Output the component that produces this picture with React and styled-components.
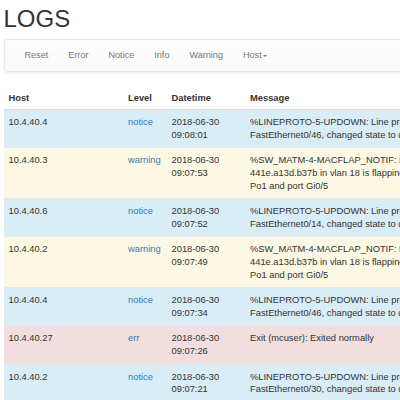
import React from "react";
import styled, { createGlobalStyle } from "styled-components";

const GlobalStyle = createGlobalStyle`
  html, body {
    margin: 0;
    padding: 0;
    background: #fff;
    overflow: hidden;
  }
  body {
    font-family: "Liberation Sans", Arial, Helvetica, sans-serif;
    font-size: 9.33px;
    line-height: 12.6px;
    color: #333;
  }
`;

const Page = styled.div`
  width: 620px;
  padding: 0 0 0 3.5px;
  box-sizing: border-box;
`;

const Title = styled.h1`
  margin: 5.5px 0 6.7px;
  font-size: 24px;
  line-height: 26.4px;
  font-weight: 500;
  color: #333;
`;

const Navbar = styled.nav`
  box-sizing: border-box;
  height: 33.5px;
  margin: 0 0 14px;
  display: flex;
  align-items: center;
  padding: 0 10px;
  border: 1px solid #e7e7e7;
  border-radius: 2.67px;
  background: linear-gradient(to bottom, #ffffff 0%, #f8f8f8 100%);
  box-shadow: inset 0 1px 0 rgba(255, 255, 255, 0.15), 0 1px 3px rgba(0, 0, 0, 0.075);
`;

const NavList = styled.ul`
  display: flex;
  margin: 0;
  padding: 0;
  list-style: none;
`;

const NavLink = styled.a`
  display: block;
  padding: 0 10px;
  color: #777;
  font-size: 9.1px;
  text-decoration: none;
  line-height: 12.6px;
  cursor: pointer;
`;

const Caret = styled.span`
  display: inline-block;
  width: 0;
  height: 0;
  margin-left: 1.33px;
  vertical-align: middle;
  border-top: 2.67px solid #777;
  border-right: 2.67px solid transparent;
  border-left: 2.67px solid transparent;
`;

const Table = styled.table`
  width: 480px;
  table-layout: fixed;
  border-collapse: collapse;
  border-spacing: 0;
`;

const HeadCell = styled.th`
  text-align: left;
  font-weight: bold;
  padding: 6px 5px 4.6px;
  line-height: 12.6px;
  border-bottom: 1px solid #dddddd;
  vertical-align: bottom;
  white-space: nowrap;
`;

const rowColors = {
  info: "#d9edf7",
  warning: "#fcf8e3",
  danger: "#f2dede",
};

const Row = styled.tr`
  background: ${(p) => rowColors[p.$variant] || "transparent"};
`;

const Cell = styled.td`
  padding: 6px 5px;
  line-height: 12.6px;
  vertical-align: top;
  border-top: 1px solid #e9e9e9;
  white-space: ${(p) => (p.$nowrap ? "nowrap" : "normal")};
`;

const LevelLink = styled.a`
  color: #337ab7;
  text-decoration: none;
`;

const LINE = (fa) =>
  `%LINEPROTO-5-UPDOWN: Line protocol on Interface FastEthernet0/${fa}, changed state to down`;
const FLAP =
  "%SW_MATM-4-MACFLAP_NOTIF: Host 441e.a13d.b37b in vlan 18 is flapping between port Po1 and port Gi0/5";

const logs = [
  { host: "10.4.40.4", level: "notice", time: "09:08:01", msg: LINE(46), v: "info" },
  { host: "10.4.40.3", level: "warning", time: "09:07:53", msg: FLAP, v: "warning" },
  { host: "10.4.40.6", level: "notice", time: "09:07:52", msg: LINE(14), v: "info" },
  { host: "10.4.40.2", level: "warning", time: "09:07:49", msg: FLAP, v: "warning" },
  { host: "10.4.40.4", level: "notice", time: "09:07:34", msg: LINE(46), v: "info" },
  { host: "10.4.40.27", level: "err", time: "09:07:26", msg: "Exit (mcuser): Exited normally", v: "danger" },
  { host: "10.4.40.2", level: "notice", time: "09:07:21", msg: LINE(30), v: "info" },
];

const navItems = ["Reset", "Error", "Notice", "Info", "Warning"];

export default function App() {
  return (
    <>
      <GlobalStyle />
      <Page>
        <Title>LOGS</Title>
        <Navbar>
          <NavList>
            {navItems.map((n) => (
              <li key={n}>
                <NavLink>{n}</NavLink>
              </li>
            ))}
            <li>
              <NavLink>
                Host<Caret />
              </NavLink>
            </li>
          </NavList>
        </Navbar>
        <Table>
          <colgroup>
            <col style={{ width: "119.5px" }} />
            <col style={{ width: "43.5px" }} />
            <col style={{ width: "78.5px" }} />
            <col style={{ width: "239px" }} />
          </colgroup>
          <thead>
            <tr>
              <HeadCell>Host</HeadCell>
              <HeadCell>Level</HeadCell>
              <HeadCell>Datetime</HeadCell>
              <HeadCell>Message</HeadCell>
            </tr>
          </thead>
          <tbody>
            {logs.map((l, i) => (
              <Row key={i} $variant={l.v}>
                <Cell>{l.host}</Cell>
                <Cell $nowrap>
                  <LevelLink>{l.level}</LevelLink>
                </Cell>
                <Cell>2018-06-30 {l.time}</Cell>
                <Cell>{l.msg}</Cell>
              </Row>
            ))}
          </tbody>
        </Table>
      </Page>
    </>
  );
}
